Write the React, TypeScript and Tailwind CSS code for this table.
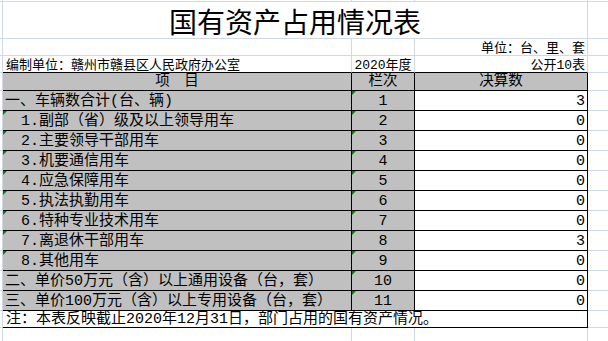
import React from "react";

const F = "font-['Liberation_Mono','Noto_Sans_CJK_SC',monospace]";

type Row = { label: string; indent: boolean; tri: boolean; n: number; v: number };

const rows: Row[] = [
  { label: "一、车辆数合计(台、辆)", indent: false, tri: false, n: 1, v: 3 },
  { label: "1.副部（省）级及以上领导用车", indent: true, tri: true, n: 2, v: 0 },
  { label: "2.主要领导干部用车", indent: true, tri: true, n: 3, v: 0 },
  { label: "3.机要通信用车", indent: true, tri: true, n: 4, v: 0 },
  { label: "4.应急保障用车", indent: true, tri: true, n: 5, v: 0 },
  { label: "5.执法执勤用车", indent: true, tri: true, n: 6, v: 0 },
  { label: "6.特种专业技术用车", indent: true, tri: true, n: 7, v: 0 },
  { label: "7.离退休干部用车", indent: true, tri: true, n: 8, v: 3 },
  { label: "8.其他用车", indent: true, tri: true, n: 9, v: 0 },
  { label: "二、单价50万元（含）以上通用设备（台，套）", indent: false, tri: false, n: 10, v: 0 },
  { label: "三、单价100万元（含）以上专用设备（台，套）", indent: false, tri: false, n: 11, v: 0 },
];

function Tri() {
  return (
    <div className="absolute left-0 top-0 w-0 h-0 border-t-[4px] border-t-[#008000] border-r-[4px] border-r-transparent" />
  );
}

export default function App() {
  return (
    <div className={`w-[608px] h-[341px] overflow-hidden bg-white text-black ${F}`}>
      {/* row 0 (partial) */}
      <div className="flex h-[2px]">
        <div className="w-[3px] shrink-0 border-r border-b border-[#d0d7e5]" />
        <div className="w-[349px] shrink-0 border-r border-b border-[#d0d7e5]" />
        <div className="w-[63px] shrink-0 border-r border-b border-[#d0d7e5]" />
        <div className="w-[173px] shrink-0 border-r border-b border-[#d0d7e5]" />
        <div className="flex-1 border-b border-[#d0d7e5]" />
      </div>
      {/* title */}
      <div className="flex h-[37px]">
        <div className="w-[3px] shrink-0 border-r border-b border-[#d0d7e5]" />
        <div className="w-[585px] shrink-0 border-r border-b border-[#d0d7e5] flex items-center justify-center pt-[2px] font-['Noto_Sans_CJK_SC',sans-serif] text-[28px] leading-none">
          国有资产占用情况表
        </div>
        <div className="flex-1 border-b border-[#d0d7e5]" />
      </div>
      {/* unit row */}
      <div className="flex h-[17px] text-[13px] leading-none">
        <div className="w-[3px] shrink-0 border-r border-b border-[#d0d7e5]" />
        <div className="w-[349px] shrink-0 border-r border-b border-[#d0d7e5]" />
        <div className="w-[63px] shrink-0 border-r border-b border-[#d0d7e5]" />
        <div className="w-[173px] shrink-0 border-r border-b border-[#d0d7e5] flex items-center justify-end pr-[2px] pt-[2px]">
          单位：台、里、套
        </div>
        <div className="flex-1 border-b border-[#d0d7e5]" />
      </div>
      {/* compile row */}
      <div className="flex h-[17px] text-[13px] leading-none">
        <div className="w-[3px] shrink-0 border-r border-b border-[#d0d7e5]" />
        <div className="w-[349px] shrink-0 border-r border-r-[#d0d7e5] border-b border-b-black flex items-center pl-[3px] pt-[2px]">
          编制单位：赣州市赣县区人民政府办公室
        </div>
        <div className="w-[63px] shrink-0 border-r border-r-[#d0d7e5] border-b border-b-black flex items-center justify-center pt-[2px]">
          2020年度
        </div>
        <div className="w-[173px] shrink-0 border-r border-r-[#d0d7e5] border-b border-b-black flex items-center justify-end pr-[2px] pt-[2px]">
          公开10表
        </div>
        <div className="flex-1 border-b border-[#d0d7e5]" />
      </div>
      {/* header */}
      <div className="flex h-[18px] text-[14.5px] leading-none">
        <div className="w-[3px] shrink-0 border-r border-b border-[#d0d7e5]" />
        <div className="w-[349px] shrink-0 bg-[#c0c0c0] border-r border-b border-black flex items-center justify-center">
          项　目
        </div>
        <div className="w-[63px] shrink-0 bg-[#c0c0c0] border-r border-b border-black flex items-center justify-center">
          栏次
        </div>
        <div className="w-[173px] shrink-0 bg-[#c0c0c0] border-r border-b border-black flex items-center justify-center">
          决算数
        </div>
        <div className="flex-1 border-b border-[#d0d7e5]" />
      </div>
      {/* data */}
      {rows.map((r) => (
        <div key={r.n} className="flex h-[20px] text-[15px] leading-none">
          <div className="w-[3px] shrink-0 border-r border-b border-[#d0d7e5]" />
          <div
            className={`relative w-[349px] shrink-0 bg-[#c0c0c0] border-r border-b border-black flex items-center whitespace-nowrap pt-[1px] ${
              r.indent ? "pl-[18px]" : "pl-[2px]"
            }`}
          >
            {r.tri && <Tri />}
            {r.label}
          </div>
          <div className="relative w-[63px] shrink-0 bg-[#c0c0c0] border-r border-b border-black flex items-center justify-center pt-[1px]">
            <Tri />
            {r.n}
          </div>
          <div className="w-[173px] shrink-0 bg-white border-r border-b border-black flex items-center justify-end pr-[2px] pt-[1px]">
            {r.v}
          </div>
          <div className="flex-1 border-b border-[#d0d7e5]" />
        </div>
      ))}
      {/* note */}
      <div className="flex h-[17px] text-[15px] leading-none">
        <div className="w-[3px] shrink-0 border-r border-b border-[#d0d7e5]" />
        <div className="w-[585px] shrink-0 border-r border-b border-black flex items-center pl-[3px] pt-[1px] whitespace-nowrap">
          注：本表反映截止2020年12月31日，部门占用的国有资产情况。
        </div>
        <div className="flex-1 border-b border-[#d0d7e5]" />
      </div>
      {/* trailing row */}
      <div className="flex h-[20px]">
        <div className="w-[3px] shrink-0 border-r border-b border-[#d0d7e5]" />
        <div className="w-[349px] shrink-0 border-r border-b border-[#d0d7e5]" />
        <div className="w-[63px] shrink-0 border-r border-b border-[#d0d7e5]" />
        <div className="w-[173px] shrink-0 border-r border-b border-[#d0d7e5]" />
        <div className="flex-1 border-b border-[#d0d7e5]" />
      </div>
    </div>
  );
}
